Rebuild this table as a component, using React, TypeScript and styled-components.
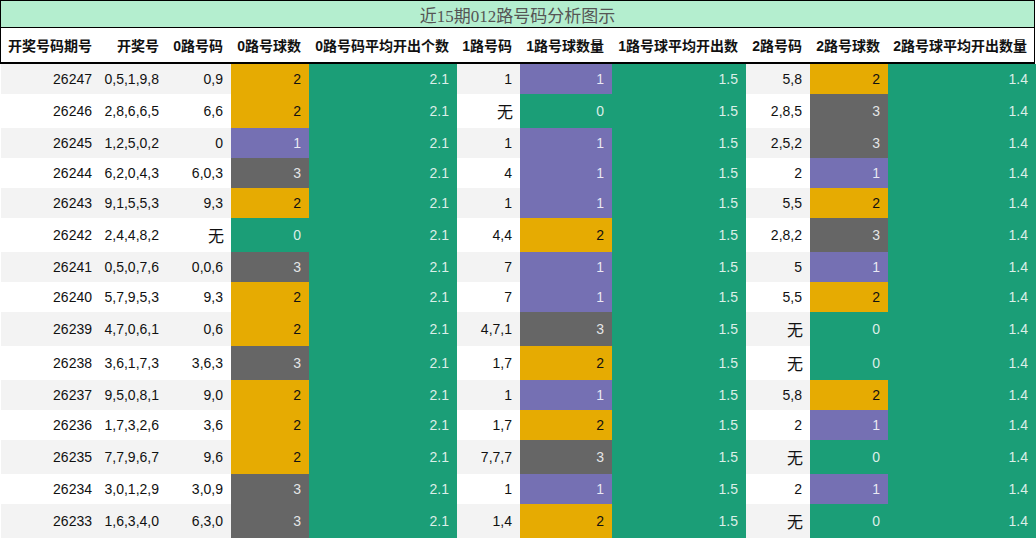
import React from "react";
import styled, { createGlobalStyle } from "styled-components";

const Global = createGlobalStyle`
  html, body { margin: 0; padding: 0; background: #ffffff; }
  body { font-family: "Liberation Sans", "Noto Sans CJK SC", sans-serif; }
`;

const COLS = "99px 67px 64px 78px 148px 63px 92px 134px 64px 78px 148px";

const COLORS: Record<number, string> = {
  0: "#1b9e77",
  1: "#7570b3",
  2: "#e6ab02",
  3: "#666666",
};

const Page = styled.div`
  width: 1036px;
  display: flex;
  flex-direction: column;
`;

const HeadBox = styled.div`
  width: 1033px;
  border: 1px solid #000;
  border-bottom: none;
  display: flex;
  flex-direction: column;
`;

const Title = styled.div`
  height: 26px;
  background: #b4eecf;
  border-bottom: 1px solid #000;
  display: flex;
  align-items: center;
  justify-content: center;
  font-family: "Liberation Serif", "Noto Sans CJK SC", serif;
  font-size: 17px;
  color: #555555;
`;

const HeaderRow = styled.div`
  display: grid;
  grid-template-columns: 98px 67px 64px 78px 148px 63px 92px 134px 64px 78px 147px;
  height: 34px;
  border-bottom: 2px solid #000;
  background: #fff;
`;

const HeadCell = styled.div`
  display: flex;
  align-items: center;
  justify-content: flex-end;
  padding-right: 7px;
  font-weight: bold;
  font-size: 14px;
  color: #111;
  white-space: nowrap;
`;

const Body = styled.div`
  display: flex;
  flex-direction: column;
  padding-left: 1px;
`;

const Row = styled.div<{ $tall: boolean; $stripe: boolean }>`
  display: grid;
  grid-template-columns: ${COLS};
  height: ${(p) => (p.$tall ? 34 : 30)}px;
  background: ${(p) => (p.$stripe ? "#f3f3f3" : "#ffffff")};
`;

const Cell = styled.div<{ $bg?: string; $light?: boolean }>`
  display: flex;
  align-items: center;
  justify-content: flex-end;
  padding-right: 8px;
  font-size: 14px;
  color: ${(p) => (p.$light ? "rgba(255,255,255,0.85)" : "#111111")};
  background: ${(p) => p.$bg || "transparent"};
  white-space: nowrap;
`;

const None = styled.span`
  font-family: "Noto Sans CJK SC", sans-serif;
  font-size: 16px;
  margin-right: -1px;
`;

const headers = [
  "开奖号码期号",
  "开奖号",
  "0路号码",
  "0路号球数",
  "0路号码平均开出个数",
  "1路号码",
  "1路号球数量",
  "1路号球平均开出数",
  "2路号码",
  "2路号球数",
  "2路号球平均开出数量",
];

type R = [number, string, string, number, string, number, string, number];

const data: R[] = [
  [26247, "0,5,1,9,8", "0,9", 2, "1", 1, "5,8", 2],
  [26246, "2,8,6,6,5", "6,6", 2, "无", 0, "2,8,5", 3],
  [26245, "1,2,5,0,2", "0", 1, "1", 1, "2,5,2", 3],
  [26244, "6,2,0,4,3", "6,0,3", 3, "4", 1, "2", 1],
  [26243, "9,1,5,5,3", "9,3", 2, "1", 1, "5,5", 2],
  [26242, "2,4,4,8,2", "无", 0, "4,4", 2, "2,8,2", 3],
  [26241, "0,5,0,7,6", "0,0,6", 3, "7", 1, "5", 1],
  [26240, "5,7,9,5,3", "9,3", 2, "7", 1, "5,5", 2],
  [26239, "4,7,0,6,1", "0,6", 2, "4,7,1", 3, "无", 0],
  [26238, "3,6,1,7,3", "3,6,3", 3, "1,7", 2, "无", 0],
  [26237, "9,5,0,8,1", "9,0", 2, "1", 1, "5,8", 2],
  [26236, "1,7,3,2,6", "3,6", 2, "1,7", 2, "2", 1],
  [26235, "7,7,9,6,7", "9,6", 2, "7,7,7", 3, "无", 0],
  [26234, "3,0,1,2,9", "3,0,9", 3, "1", 1, "2", 1],
  [26233, "1,6,3,4,0", "6,3,0", 3, "1,4", 2, "无", 0],
];

const Code = ({ v }: { v: string }) => (
  <Cell>{v === "无" ? <None>无</None> : v}</Cell>
);

const CountCell = ({ n }: { n: number }) => (
  <Cell $bg={COLORS[n]} $light={n !== 2}>
    {n}
  </Cell>
);

const AvgCell = ({ v }: { v: string }) => (
  <Cell $bg={COLORS[0]} $light>
    {v}
  </Cell>
);

export default function App() {
  return (
    <Page>
      <Global />
      <HeadBox>
        <Title>近15期012路号码分析图示</Title>
        <HeaderRow>
          {headers.map((h) => (
            <HeadCell key={h}>{h}</HeadCell>
          ))}
        </HeaderRow>
      </HeadBox>
      <Body>
        {data.map((r, i) => {
          const tall = r.some((v) => v === "无");
          return (
            <Row key={r[0]} $tall={tall} $stripe={i % 2 === 0}>
              <Cell>{r[0]}</Cell>
              <Cell>{r[1]}</Cell>
              <Code v={r[2]} />
              <CountCell n={r[3]} />
              <AvgCell v="2.1" />
              <Code v={r[4]} />
              <CountCell n={r[5]} />
              <AvgCell v="1.5" />
              <Code v={r[6]} />
              <CountCell n={r[7]} />
              <AvgCell v="1.4" />
            </Row>
          );
        })}
      </Body>
    </Page>
  );
}
